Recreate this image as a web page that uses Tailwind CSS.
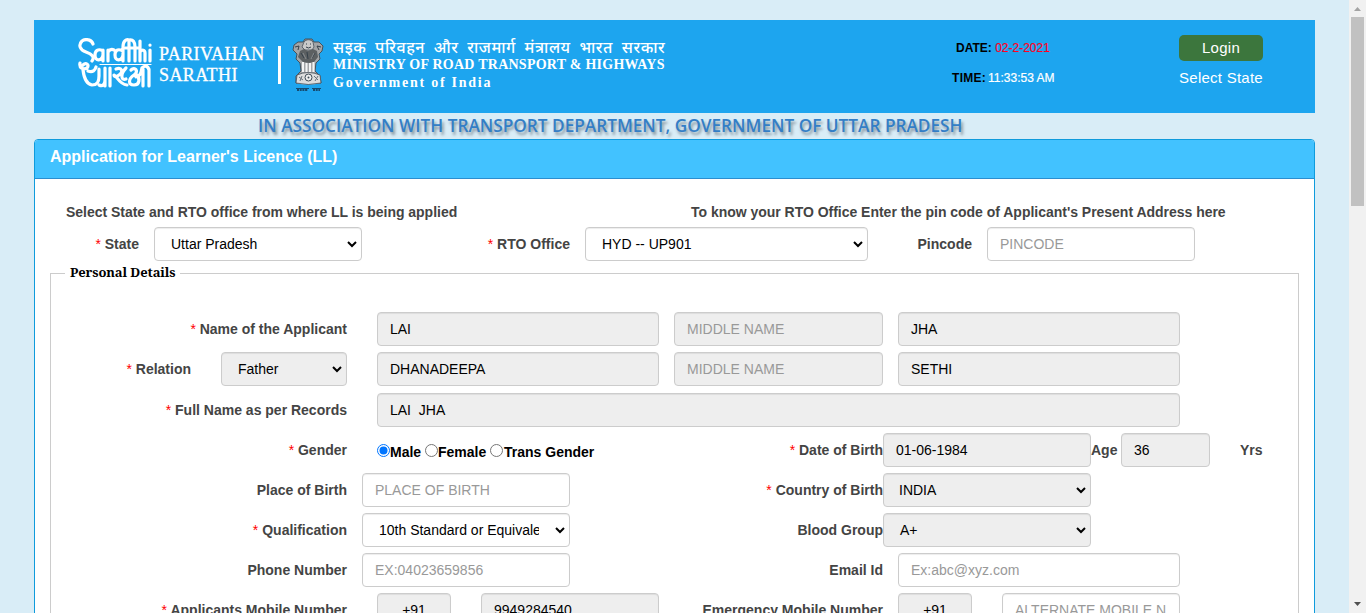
<!DOCTYPE html>
<html lang="en">
<head>
<meta charset="utf-8">
<title>Application for Learner's Licence (LL)</title>
<script src="https://cdn.jsdelivr.net/npm/@tailwindcss/browser@4"></script>
</head>
<body class="flex h-[613px] overflow-hidden bg-[#d9edf7] font-['Liberation_Sans',Arial,sans-serif] text-sm leading-5 text-black">
<svg class="hidden"><symbol id="arrow" viewBox="0 0 12 12"><path d="M2 4L6 8L10 4" fill="none" stroke="#000" stroke-width="2"/></symbol></svg>
<div class="h-[613px] w-[1349px] shrink-0 overflow-hidden px-[34px] pt-5">
  <header class="flex h-[93px] w-[1281px] items-start bg-[#1da5ef] text-white">
    <svg class="ml-[44px] mt-[18px] h-[52px] w-[75px] shrink-0" viewBox="0 0 75 52" fill="none" stroke="#fff" stroke-linecap="round" stroke-linejoin="round">
      <g stroke-width="3.2">
        <path d="M15 6C14 2 8 0 4 3C0 7 2 12 8 14C14 16 17 19 14 23" />
        <path d="M25 13C20 10 17 13 17 17C17 24 24 23 25 17M25 12V23"/>
        <path d="M30 23V12M30 14C32 11 34 11 36 12"/>
        <path d="M45 13C39 10 37 13 37 17C37 24 44 23 45 17M45 23V9C45 3 48 1 51 2C55 1 57 4 57 9V23"/>
        <path d="M51 3V23M47 10H61M62 3V23M62 14C64 11 67 12 67 15V23M72 12V23M72 7V7.200"/>
        <path d="M2 25C1 30 5 32 9 30C12 27 8 24 5 27M5 32C6 40 8 46 14 47C20 47 21 43 21 38V31M10 33C15 35 17 32 18 29"/>
        <path d="M27 30V48M21 47C25 49 27 46 27 42M32 30V48"/>
        <path d="M38 31C44 29 46 34 41 37C37 40 36 38 36 37C39 38 41 46 49 47M48 30C42 36 43 43 48 41"/>
        <path d="M53 32C57 28 61 33 56 37C50 41 50 47 56 47C62 47 62 40 59 37M65 31V48M71 31V48M58 39C63 38 63 34 64 30C67 27 70 28 71 32"/>
      </g>
      <path d="M22 26.500H73" stroke-width="1.200"/>
    </svg>
    <div class="ml-[6px] mt-[24px] w-[113px] whitespace-nowrap font-['Liberation_Serif',serif] text-[18px] leading-[21px] tracking-[0.4px] [-webkit-text-stroke:0.3px_#fff]">
      <div>PARIVAHAN</div><div>SARATHI</div>
    </div>
    <div class="ml-[6px] mt-[26px] h-[38px] w-[3px] bg-white"></div>
    <svg class="ml-[11px] mt-[18px] h-[54px] w-[32px] shrink-0" viewBox="0 0 32 54">
      <path d="M2 7L6 4L11 4L13 1H20L22 4L27 4L31 8L30 13L27 16L28 21L24 25L23 33L28 38L29 45H4L4 38L9 33L8 25L4 21L5 16L1 12Z" fill="#a3a5a7" stroke="#46515a" stroke-width="1"/>
      <path d="M12 4C14 1 19 1 21 4L22 9L20 12H13L10 9Z" fill="#c9c9c9" stroke="#46515a" stroke-width=".8"/>
      <path d="M8 13L12 11L16 13L21 11L25 13L26 19L22 24L17 25L11 24L6 19Z" fill="#5c6062"/>
      <path d="M3 9L7 8L6 12M29 9L25 8L27 12M14 6H15M18 6H19M14 9L16.500 10L19 9M9 15L12 20M23 15L20 20M15 14L16 21" fill="none" stroke="#35404a" stroke-width="1"/>
      <path d="M11 15L14 21M22 15L19 21" stroke="#898d90"/>
      <path d="M11 24V34M14.500 25V34M18 25V34M21.500 24V34" stroke="#f4f4f4" stroke-width="2"/>
      <path d="M5 37Q16 32 28 37L29 45Q16 48 4 45Z" fill="#ddd" stroke="#46515a" stroke-width=".8"/>
      <path d="M7 39L11 42M10 38L8 43M22 38L26 42M26 38L23 43" stroke="#66717a"/>
      <circle cx="16.500" cy="39.500" r="3.500" fill="#eee" stroke="#3d4b56"/><circle cx="16.500" cy="39.500" r="1" fill="#3d4b56"/>
      <path d="M4 50.500H17M20 50.500H29" stroke="#164b70" stroke-width="1"/><path d="M5 52H16M21 52H28" stroke="#164b70" stroke-dasharray="2 .7" stroke-width="2"/>
    </svg>
    <div class="ml-[9px] mt-[18px] w-[340px] whitespace-nowrap font-['Liberation_Serif',serif] text-[14px] font-bold leading-[18px]">
      <div class="font-['Noto_Sans',sans-serif] text-[16px] font-medium tracking-[0.55px] [word-spacing:4px]">सइक परिवहन और राजमार्ग मंत्रालय भारत सरकार</div>
      <div class="tracking-[0.25px]">MINISTRY OF ROAD TRANSPORT &amp; HIGHWAYS</div>
      <div class="tracking-[1.75px]">Government of India</div>
    </div>
    <div class="ml-[279px] mt-[18px] w-[110px] whitespace-nowrap text-[12px] leading-5">
      <div class="pl-[4px]"><b class="font-bold text-black">DATE:</b> <span class="text-[#ff0022] [-webkit-text-stroke:0.2px_#ff0022]">02-2-2021</span></div>
      <div class="mt-[10px] flex"><b class="w-[36px] tracking-[0.3px] text-black">TIME:</b><span class="[-webkit-text-stroke:0.2px_#fff]">11:33:53 AM</span></div>
    </div>
    <div class="ml-[117px] mt-[15px] w-[84px] text-center text-[15px] tracking-[0.25px]">
      <div class="h-[26px] rounded-[5px] bg-[#3c763d] leading-[26px]">Login</div>
      <div class="mt-[7px] whitespace-nowrap">Select State</div>
    </div>
  </header>
  <div class="h-[26px] whitespace-nowrap pl-[224px] pt-[2px] font-['Open_Sans',sans-serif] text-[18px] font-semibold text-[#337ec6] [text-shadow:2px_3px_3px_rgba(80,90,100,0.6)]"><span class="inline-block origin-left scale-x-[0.956]">IN ASSOCIATION WITH TRANSPORT DEPARTMENT, GOVERNMENT OF UTTAR PRADESH</span></div>
  <main class="h-[500px] w-[1281px] rounded-t-[4px] border border-[#0f9bdc] bg-white">
    <h1 class="h-[39px] rounded-t-[3px] border-b border-[#2b8ed0] bg-[#42c2ff] pl-[15px] pt-[5px] text-base font-bold text-white">Application for Learner's Licence (LL)</h1>
    <div class="flex h-[48px] items-end pb-[5px] pl-[31px] font-bold tracking-[-0.02px] text-[#444]">
      <div class="w-[625px]">Select State and RTO office from where LL is being applied</div>
      <div>To know your RTO Office Enter the pin code of Applicant's Present Address here</div>
    </div>
    <div class="flex h-[34px] items-center">
      <div class="w-[104px] text-right font-bold text-[#444]"><span class="font-normal text-[#f00]">*</span> State</div>
      <div class="ml-[15px] flex h-[34px] w-[208px] items-center justify-between rounded-[4px] border border-[#ccc] pl-4 pr-[3px] shadow-[inset_0_1px_1px_rgba(0,0,0,0.075)]">Uttar Pradesh<svg class="h-3 w-3"><use href="#arrow"/></svg></div>
      <div class="w-[208px] text-right font-bold text-[#444]"><span class="font-normal text-[#f00]">*</span> RTO Office</div>
      <div class="ml-[15px] flex h-[34px] w-[283px] items-center justify-between rounded-[4px] border border-[#ccc] pl-4 pr-[3px] shadow-[inset_0_1px_1px_rgba(0,0,0,0.075)]">HYD -- UP901<svg class="h-3 w-3"><use href="#arrow"/></svg></div>
      <div class="w-[104px] text-right font-bold text-[#444]">Pincode</div>
      <div class="ml-[15px] flex h-[34px] w-[208px] items-center rounded-[4px] border border-[#ccc] pl-3 text-[#999] shadow-[inset_0_1px_1px_rgba(0,0,0,0.075)]">PINCODE</div>
    </div>
    <fieldset class="ml-[15px] mt-[2px] h-[500px] w-[1249px] border border-[#ccc] pt-[29px]">
      <legend class="ml-[14px] h-[20px] w-[115px] whitespace-nowrap px-[5px] font-['Noto_Serif','Liberation_Serif',serif] text-[13px] font-bold leading-[18px] tracking-[-0.1px]">Personal Details</legend>
      <div class="flex h-10 items-start leading-[34px]">
        <div class="w-[296px] text-right font-bold text-[#444]"><span class="font-normal text-[#f00]">*</span> Name of the Applicant</div>
        <div class="ml-[30px] flex h-[34px] w-[282px] items-center rounded-[4px] border border-[#ccc] bg-[#eee] pl-3 shadow-[inset_0_1px_1px_rgba(0,0,0,0.075)]">LAI</div>
        <div class="ml-[15px] flex h-[34px] w-[209px] items-center rounded-[4px] border border-[#ccc] bg-[#eee] pl-3 text-[#999] shadow-[inset_0_1px_1px_rgba(0,0,0,0.075)]">MIDDLE NAME</div>
        <div class="ml-[15px] flex h-[34px] w-[282px] items-center rounded-[4px] border border-[#ccc] bg-[#eee] pl-3 shadow-[inset_0_1px_1px_rgba(0,0,0,0.075)]">JHA</div>
      </div>
      <div class="flex h-[41px] items-start leading-[34px]">
        <div class="w-[140px] text-right font-bold text-[#444]"><span class="font-normal text-[#f00]">*</span> Relation</div>
        <div class="ml-[30px] flex h-[34px] w-[126px] items-center justify-between rounded-[4px] border border-[#ccc] bg-[#eee] pl-4 pr-[3px] shadow-[inset_0_1px_1px_rgba(0,0,0,0.075)]">Father<svg class="h-3 w-3"><use href="#arrow"/></svg></div>
        <div class="ml-[30px] flex h-[34px] w-[282px] items-center rounded-[4px] border border-[#ccc] bg-[#eee] pl-3 shadow-[inset_0_1px_1px_rgba(0,0,0,0.075)]">DHANADEEPA</div>
        <div class="ml-[15px] flex h-[34px] w-[209px] items-center rounded-[4px] border border-[#ccc] bg-[#eee] pl-3 text-[#999] shadow-[inset_0_1px_1px_rgba(0,0,0,0.075)]">MIDDLE NAME</div>
        <div class="ml-[15px] flex h-[34px] w-[282px] items-center rounded-[4px] border border-[#ccc] bg-[#eee] pl-3 shadow-[inset_0_1px_1px_rgba(0,0,0,0.075)]">SETHI</div>
      </div>
      <div class="flex h-10 items-start leading-[34px]">
        <div class="w-[296px] text-right font-bold text-[#444]"><span class="font-normal text-[#f00]">*</span> Full Name as per Records</div>
        <div class="ml-[30px] flex h-[34px] w-[803px] items-center whitespace-pre rounded-[4px] border border-[#ccc] bg-[#eee] pl-3 shadow-[inset_0_1px_1px_rgba(0,0,0,0.075)]">LAI  JHA</div>
      </div>
      <div class="flex h-10 items-start leading-[34px]">
        <div class="w-[296px] text-right font-bold text-[#444]"><span class="font-normal text-[#f00]">*</span> Gender</div>
        <div class="ml-[30px] flex h-[34px] w-[270px] items-center whitespace-nowrap font-bold">
          <svg class="h-[13px] w-[13px]" viewBox="0 0 13 13"><circle cx="6.500" cy="6.500" r="6" fill="#fff" stroke="#0075ff"/><circle cx="6.500" cy="6.500" r="4" fill="#0075ff"/></svg><span class="w-[35px] pt-[3px]">Male</span>
          <svg class="h-[13px] w-[13px]" viewBox="0 0 13 13"><circle cx="6.500" cy="6.500" r="6" fill="#fff" stroke="#767676"/></svg><span class="w-[52px] pt-[3px]">Female</span>
          <svg class="h-[13px] w-[13px]" viewBox="0 0 13 13"><circle cx="6.500" cy="6.500" r="6" fill="#fff" stroke="#767676"/></svg><span class="pl-px pt-[3px]">Trans Gender</span>
        </div>
        <div class="w-[236px] text-right font-bold text-[#444]"><span class="font-normal text-[#f00]">*</span> Date of Birth</div>
        <div class="flex h-[34px] w-[208px] items-center rounded-[4px] border border-[#ccc] bg-[#eee] pl-3 shadow-[inset_0_1px_1px_rgba(0,0,0,0.075)]">01-06-1984</div>
        <div class="w-[30px] font-bold text-[#444]">Age</div>
        <div class="flex h-[34px] w-[89px] items-center rounded-[4px] border border-[#ccc] bg-[#eee] pl-3 shadow-[inset_0_1px_1px_rgba(0,0,0,0.075)]">36</div>
        <div class="ml-[30px] font-bold text-[#444]">Yrs</div>
      </div>
      <div class="flex h-10 items-start leading-[34px]">
        <div class="w-[296px] text-right font-bold text-[#444]">Place of Birth</div>
        <div class="ml-[15px] flex h-[34px] w-[208px] items-center rounded-[4px] border border-[#ccc] pl-3 text-[#999] shadow-[inset_0_1px_1px_rgba(0,0,0,0.075)]">PLACE OF BIRTH</div>
        <div class="w-[313px] text-right font-bold text-[#444]"><span class="font-normal text-[#f00]">*</span> Country of Birth</div>
        <div class="flex h-[34px] w-[208px] items-center justify-between rounded-[4px] border border-[#ccc] bg-[#eee] pl-[15px] pr-[3px] shadow-[inset_0_1px_1px_rgba(0,0,0,0.075)]">INDIA<svg class="h-3 w-3"><use href="#arrow"/></svg></div>
      </div>
      <div class="flex h-10 items-start leading-[34px]">
        <div class="w-[296px] text-right font-bold text-[#444]"><span class="font-normal text-[#f00]">*</span> Qualification</div>
        <div class="ml-[15px] flex h-[34px] w-[208px] items-center justify-between rounded-[4px] border border-[#ccc] pl-4 pr-[3px] shadow-[inset_0_1px_1px_rgba(0,0,0,0.075)]"><span class="w-[160px] overflow-hidden whitespace-nowrap">10th Standard or Equivale</span><svg class="h-3 w-3"><use href="#arrow"/></svg></div>
        <div class="w-[313px] text-right font-bold text-[#444]">Blood Group</div>
        <div class="flex h-[34px] w-[208px] items-center justify-between rounded-[4px] border border-[#ccc] bg-[#eee] pl-4 pr-[3px] shadow-[inset_0_1px_1px_rgba(0,0,0,0.075)]">A+<svg class="h-3 w-3"><use href="#arrow"/></svg></div>
      </div>
      <div class="flex h-10 items-start leading-[34px]">
        <div class="w-[296px] text-right font-bold text-[#444]">Phone Number</div>
        <div class="ml-[15px] flex h-[34px] w-[208px] items-center rounded-[4px] border border-[#ccc] pl-3 text-[#999] shadow-[inset_0_1px_1px_rgba(0,0,0,0.075)]">EX:04023659856</div>
        <div class="w-[313px] text-right font-bold text-[#444]">Email Id</div>
        <div class="ml-[15px] flex h-[34px] w-[282px] items-center rounded-[4px] border border-[#ccc] pl-3 text-[#999] shadow-[inset_0_1px_1px_rgba(0,0,0,0.075)]">Ex:abc@xyz.com</div>
      </div>
      <div class="flex h-10 items-start leading-[34px]">
        <div class="w-[296px] text-right font-bold text-[#444]"><span class="font-normal text-[#f00]">*</span> Applicants Mobile Number</div>
        <div class="ml-[30px] flex h-[34px] w-[74px] items-center justify-center rounded-[4px] border border-[#ccc] bg-[#eee] shadow-[inset_0_1px_1px_rgba(0,0,0,0.075)]">+91</div>
        <div class="ml-[30px] flex h-[34px] w-[178px] items-center rounded-[4px] border border-[#ccc] bg-[#eee] pl-3 shadow-[inset_0_1px_1px_rgba(0,0,0,0.075)]">9949284540</div>
        <div class="w-[224px] text-right font-bold text-[#444]">Emergency Mobile Number</div>
        <div class="ml-[15px] flex h-[34px] w-[74px] items-center justify-center rounded-[4px] border border-[#ccc] bg-[#eee] shadow-[inset_0_1px_1px_rgba(0,0,0,0.075)]">+91</div>
        <div class="ml-[30px] flex h-[34px] w-[178px] items-center whitespace-nowrap rounded-[4px] border border-[#ccc] pl-3 text-[#999] shadow-[inset_0_1px_1px_rgba(0,0,0,0.075)]">ALTERNATE MOBILE N</div>
      </div>
    </fieldset>
  </main>
</div>
<div class="flex h-[613px] w-[17px] shrink-0 flex-col items-center bg-[#f1f1f1]">
  <svg class="h-[17px] w-[17px] shrink-0" viewBox="0 0 17 17"><path d="M5 11L8.500 7L12 11Z" fill="#a3a3a3"/></svg>
  <div class="h-[189px] w-[13px] shrink-0 bg-[#c1c1c1]"></div>
  <svg class="mt-auto h-[17px] w-[17px] shrink-0" viewBox="0 0 17 17"><path d="M5 6L8.500 10L12 6Z" fill="#505050"/></svg>
</div>
</body>
</html>
